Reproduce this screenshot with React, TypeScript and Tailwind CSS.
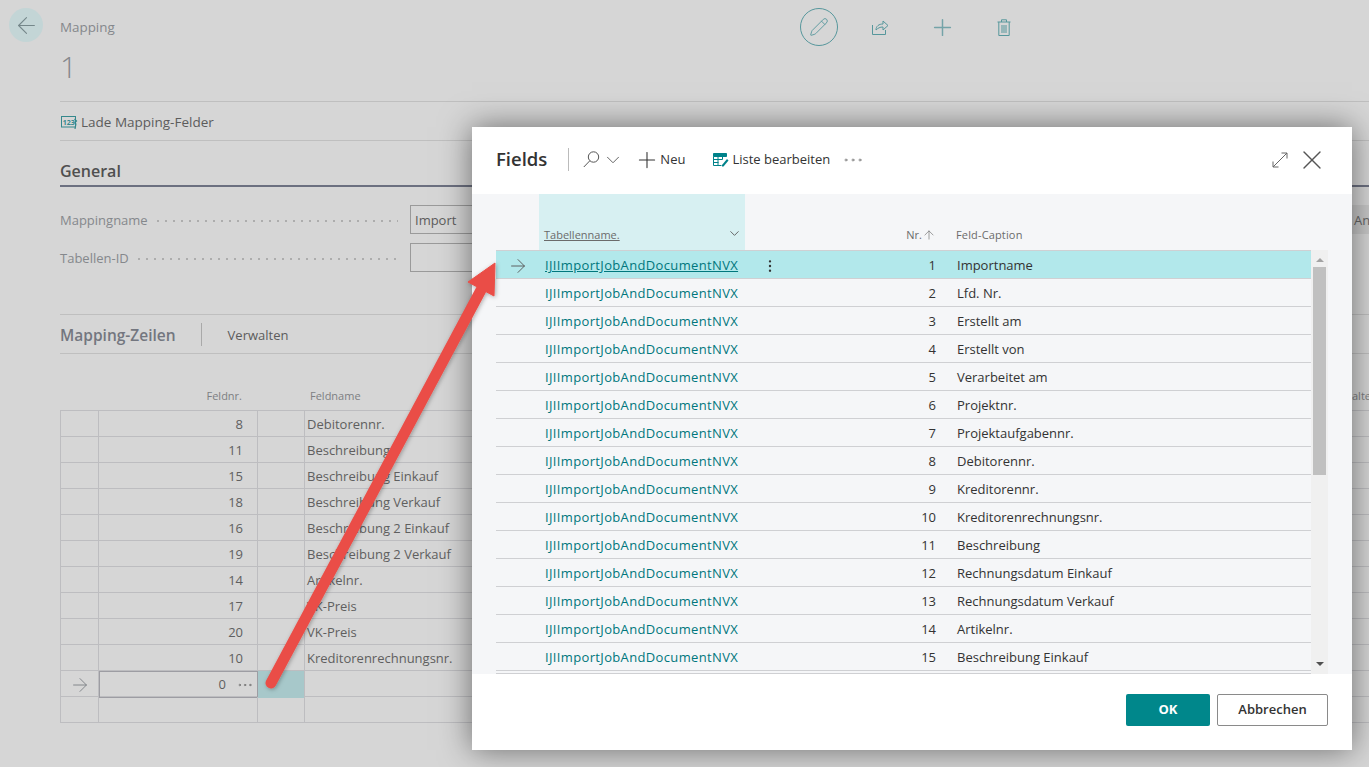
import { ArrowLeft, ArrowRight, ArrowUp, ChevronDown, Ellipsis, EllipsisVertical, Pencil, Plus, X } from "lucide-react";

const bgRows = ["Debitorennr.", "Beschreibung", "Beschreibung Einkauf", "Beschreibung Verkauf", "Beschreibung 2 Einkauf", "Beschreibung 2 Verkauf", "Artikelnr.", "VK-Preis", "VK-Preis", "Kreditorenrechnungsnr."];
const bgNos = [8, 11, 15, 18, 16, 19, 14, 17, 20, 10];
const captions = ["Importname", "Lfd. Nr.", "Erstellt am", "Erstellt von", "Verarbeitet am", "Projektnr.", "Projektaufgabennr.", "Debitorennr.", "Kreditorennr.", "Kreditorenrechnungsnr.", "Beschreibung", "Rechnungsdatum Einkauf", "Rechnungsdatum Verkauf", "Artikelnr.", "Beschreibung Einkauf"];

function Dots() {
  return <div className="ml-[6px] mr-[12px] h-[4px] flex-1 bg-[radial-gradient(circle,#adadad_1px,transparent_1.2px)] bg-[length:8px_4px]" />;
}

function Background() {
  return (
    <div className="flex h-[767px] w-full flex-col bg-[#d6d6d6] text-[13px] text-[#5f5f5f]">
      <div className="flex h-[101px] shrink-0">
        <div className="ml-[9px] mt-[8px] flex h-[34px] w-[34px] items-center justify-center rounded-full bg-[#c3d5d6] text-[#75878a]">
          <ArrowLeft size={27} strokeWidth={0.95} />
        </div>
        <div className="ml-[17px] flex-1">
          <div className="mt-[18px] text-[13.4px] leading-[18px] text-[#85888c]">Mapping</div>
          <div className="mt-[13px] text-[30px] font-light leading-[36px] text-[#85888c]">1</div>
        </div>
        <div className="mr-[358px] mt-[8px] flex items-center self-start text-[#56979c]">
          <div className="flex h-[38px] w-[38px] items-center justify-center rounded-full border border-[#56979c]"><Pencil size={20} strokeWidth={1.1} /></div>
          <svg width="17" height="16" viewBox="0 0 17 16" fill="none" stroke="#56979c" className="ml-[34px]">
            <path d="M0.5 6v9.5h13V11" />
            <path d="M4 11c0-4 3-6 7-6V2l5 4.5-5 4.5V8c-3 0-5 1-7 3z" />
          </svg>
          <Plus size={27} strokeWidth={1.3} color="#74a3a8" className="ml-[40px]" />
          <svg width="14" height="17" viewBox="0 0 14 17" fill="none" stroke="#56979c" className="ml-[41px]">
            <path d="M0.5 3h13M4.5 3V0.8h5V3M1.8 3v13.5h10.4V3M5 6v8M7 6v8M9 6v8" />
          </svg>
        </div>
      </div>
      <div className="ml-[60px] flex h-[40px] shrink-0 items-center border-y border-[#bfbfbf] pt-[3px] text-[13.5px] text-[#5c5c5c]">
        <svg width="17" height="14" viewBox="0 0 17 14" className="ml-px mr-[3px]" fill="none" stroke="#35888c">
          <rect x="0.5" y="0.5" width="14" height="10.5" />
          <text x="1.8" y="8.5" fontSize="7" fill="#35888c" stroke="none" fontWeight="700" fontFamily="'Open Sans', sans-serif">123</text>
          <path d="M13.5 3l2 2-2 2M15 7.5l-1 5.5" strokeWidth="1.2" />
        </svg>
        Lade Mapping-Felder
      </div>
      <div className="ml-[60px] flex h-[46px] shrink-0 items-end border-b-2 border-[#6c7080] pb-[3px] text-[16px] font-semibold leading-[22px] text-[#4f4f4f]">General</div>
      <div className="ml-[60px] mt-[18px] flex h-[29px] shrink-0 items-center">
        <div className="flex w-[350px] items-center pt-[2px] text-[#85888c]">Mappingname<Dots /></div>
        <div className="flex h-[29px] w-[200px] items-center border border-[#9a9a9a] pl-[4px] pt-[2px] text-[#5c5c5c]">Import</div>
        <div className="ml-auto flex h-[29px] w-[17px] items-center overflow-hidden bg-[#c8c8c8] pl-[2px] pt-[2px] text-[#666]">An</div>
      </div>
      <div className="ml-[60px] mt-[9px] flex h-[29px] shrink-0 items-center">
        <div className="flex w-[350px] items-center pt-[2px] text-[#85888c]">Tabellen-ID<Dots /></div>
        <div className="h-[29px] w-[200px] border border-[#9a9a9a]" />
      </div>
      <div className="ml-[60px] mt-[42px] flex h-[40px] shrink-0 items-center border-y border-[#bfbfbf] pt-[3px]">
        <span className="text-[15.5px] font-semibold text-[#73767f]">Mapping-Zeilen</span>
        <span className="mx-[25px] -mt-[3px] h-[23px] w-px bg-[#a9a9a9]" />
        <span className="ml-px text-[#5c5c5c]">Verwalten</span>
      </div>
      <div className="ml-[60px] flex h-[56px] shrink-0 items-end pb-[6px] text-[11px] text-[#7d7f83]">
        <div className="w-[182px] text-right">Feldnr.</div>
        <div className="ml-[68px]">Feldname</div>
        <div className="ml-auto w-[17px] overflow-hidden whitespace-nowrap">alte</div>
      </div>
      <div className="ml-[60px] border-t border-[#bdbdc0]">
        {bgRows.map((name, i) => (
          <div key={i} className="grid h-[26px] grid-cols-[38px_159px_47px_1fr] border-b border-l border-[#bdbdc0] leading-[27px]">
            <div className="border-r border-[#bdbdc0]" />
            <div className="border-r border-[#bdbdc0] pr-[14px] text-right">{bgNos[i]}</div>
            <div className="border-r border-[#bdbdc0]" />
            <div className="pl-[2px]">{name}</div>
          </div>
        ))}
        <div className="grid h-[26px] grid-cols-[38px_159px_47px_1fr] border-b border-l border-[#bdbdc0]">
          <div className="flex items-center justify-center border-r border-[#bdbdc0] text-[#7c7f84]"><ArrowRight size={22} strokeWidth={1} /></div>
          <div className="flex items-center justify-end border border-[#9d9da3] pr-[3px] leading-[25px]">0<Ellipsis size={18} strokeWidth={0.9} className="ml-[10px]" /></div>
          <div className="border-r border-[#bdbdc0] bg-[#a7c8ca]" />
          <div />
        </div>
        <div className="grid h-[26px] grid-cols-[38px_159px_47px_1fr] border-b border-l border-[#bdbdc0]">
          <div className="border-r border-[#bdbdc0]" />
          <div className="border-r border-[#bdbdc0]" />
          <div className="border-r border-[#bdbdc0]" />
          <div />
        </div>
      </div>
    </div>
  );
}

function Dialog() {
  return (
    <div className="absolute left-[472px] top-[127px] flex h-[623px] w-[880px] flex-col bg-white text-[13px] text-[#333] shadow-[0_0_30px_rgba(0,0,0,0.5)]">
      <div className="flex h-[67px] shrink-0 items-center pb-[2px] pl-[24px] pr-[24px]">
        <span className="-mt-[2px] text-[18.5px] font-semibold text-[#333]">Fields</span>
        <span className="ml-[21px] h-[23px] w-px bg-[#bbb]" />
        <svg width="17" height="17" viewBox="0 0 17 17" fill="none" stroke="#555" className="ml-[14px]">
          <circle cx="10.5" cy="6" r="5.2" />
          <path d="M6.8 9.8L0.8 16" />
        </svg>
        <ChevronDown size={22} strokeWidth={1} className="ml-[2px] text-[#555]" />
        <Plus size={26} strokeWidth={1} className="ml-[10px] text-[#333]" />
        <span>Neu</span>
        <svg width="16" height="14" viewBox="0 0 16 14" className="ml-[28px]" fill="none" stroke="#00828a">
          <path d="M0.5 0.5h13v3h-13z" fill="#00828a" />
          <path d="M0.5 3.5v9h8M5 3.5v9M9.5 3.5v3M0.5 6.5h9M0.5 9.5h5" />
          <path d="M9 12l5-6 1.5 1.5-5 6H9z" fill="#00828a" stroke="none" />
        </svg>
        <span className="ml-[3px]">Liste bearbeiten</span>
        <Ellipsis size={24} strokeWidth={0.8} className="ml-[11px] text-[#777]" />
        <svg width="16" height="16" viewBox="0 0 16 16" fill="none" stroke="#666" className="ml-auto">
          <path d="M1 15L15 1M9.5 1H15V6.5M1 9.5V15H6.5" />
        </svg>
        <X size={32} strokeWidth={1} className="ml-[8px] text-[#555]" />
      </div>
      <div className="flex h-[480px] shrink-0 flex-col overflow-hidden bg-[#f5f6f8] pl-[24px] pr-[24px]">
        <div className="flex h-[56px] shrink-0 text-[11px] text-[#6b6b6b]">
          <div className="w-[43px]" />
          <div className="flex w-[206px] items-end justify-between bg-[#d7f0f2] pb-[7px] pl-[5px] pr-[3px]">
            <span className="underline">Tabellenname.</span>
            <ChevronDown size={15} strokeWidth={1.4} className="mb-[2px] text-[#555]" />
          </div>
          <div className="flex w-[191px] items-end justify-end pb-[7px]">Nr.<ArrowUp size={14} strokeWidth={1.1} className="mb-[1px]" /></div>
          <div className="ml-[20px] flex items-end pb-[7px] tracking-[0.15px]">Feld-Caption</div>
        </div>
        <div className="flex min-h-0 flex-1">
          <div className="flex-1 overflow-hidden border-y border-[#cfd0d3]">
            {captions.map((c, i) => (
              <div key={i} className={`flex h-[28px] items-center border-b border-[#cfd0d3] pt-[2px] ${i === 0 ? "bg-[#b2e8eb]" : ""}`}>
                <div className="flex w-[42px] justify-center pl-[1px] text-[#555]">{i === 0 && <ArrowRight size={22} strokeWidth={1} />}</div>
                <div className={`w-[206px] whitespace-nowrap pl-[7px] tracking-[0.35px] text-[#00777d] ${i === 0 ? "underline" : ""}`}>IJIImportJobAndDocumentNVX</div>
                <div className="flex w-[48px] justify-center pl-[4px] text-[#333]">{i === 0 && <EllipsisVertical size={16} strokeWidth={1.6} />}</div>
                <div className="w-[144px] text-right">{i + 1}</div>
                <div className="pl-[21px]">{c}</div>
              </div>
            ))}
          </div>
          <div className="flex w-[17px] shrink-0 flex-col items-center bg-[#f0f0f0]">
            <span className="mt-[8px] h-0 w-0 border-x-[4px] border-b-[4px] border-x-transparent border-b-[#a3a3a3]" />
            <div className="mt-[5px] h-[208px] w-[13px] bg-[#c0c0c0]" />
            <span className="mt-auto mb-[8px] h-0 w-0 border-x-[4px] border-t-[4px] border-x-transparent border-t-[#505050]" />
          </div>
        </div>
      </div>
      <div className="flex flex-1 items-start justify-end pr-[24px] pt-[20px]">
        <button className="h-[32px] w-[84px] rounded-[2px] bg-[#00878b] text-[13px] font-bold text-white">OK</button>
        <button className="ml-[7px] h-[32px] w-[111px] rounded-[2px] border border-[#8a8a8a] text-[13px] font-semibold text-[#333]">Abbrechen</button>
      </div>
    </div>
  );
}

export default function App() {
  return (
    <div className="relative h-[767px] w-full overflow-hidden font-['Open_Sans','Noto_Sans',sans-serif]">
      <Background />
      <Dialog />
      <svg width="1369" height="767" className="pointer-events-none absolute left-0 top-0">
        <defs>
          <filter id="s" x="-20%" y="-20%" width="140%" height="140%"><feDropShadow dx="1" dy="1" stdDeviation="2" floodColor="#000" floodOpacity="0.3" /></filter>
        </defs>
        <g filter="url(#s)">
          <path d="M271 683L481 290" stroke="#ea4e47" strokeWidth="11" strokeLinecap="round" fill="none" />
          <path d="M495 263L468 282L494 296Z" fill="#ea4e47" stroke="#ea4e47" strokeWidth="1" strokeLinejoin="round" />
        </g>
      </svg>
    </div>
  );
}
